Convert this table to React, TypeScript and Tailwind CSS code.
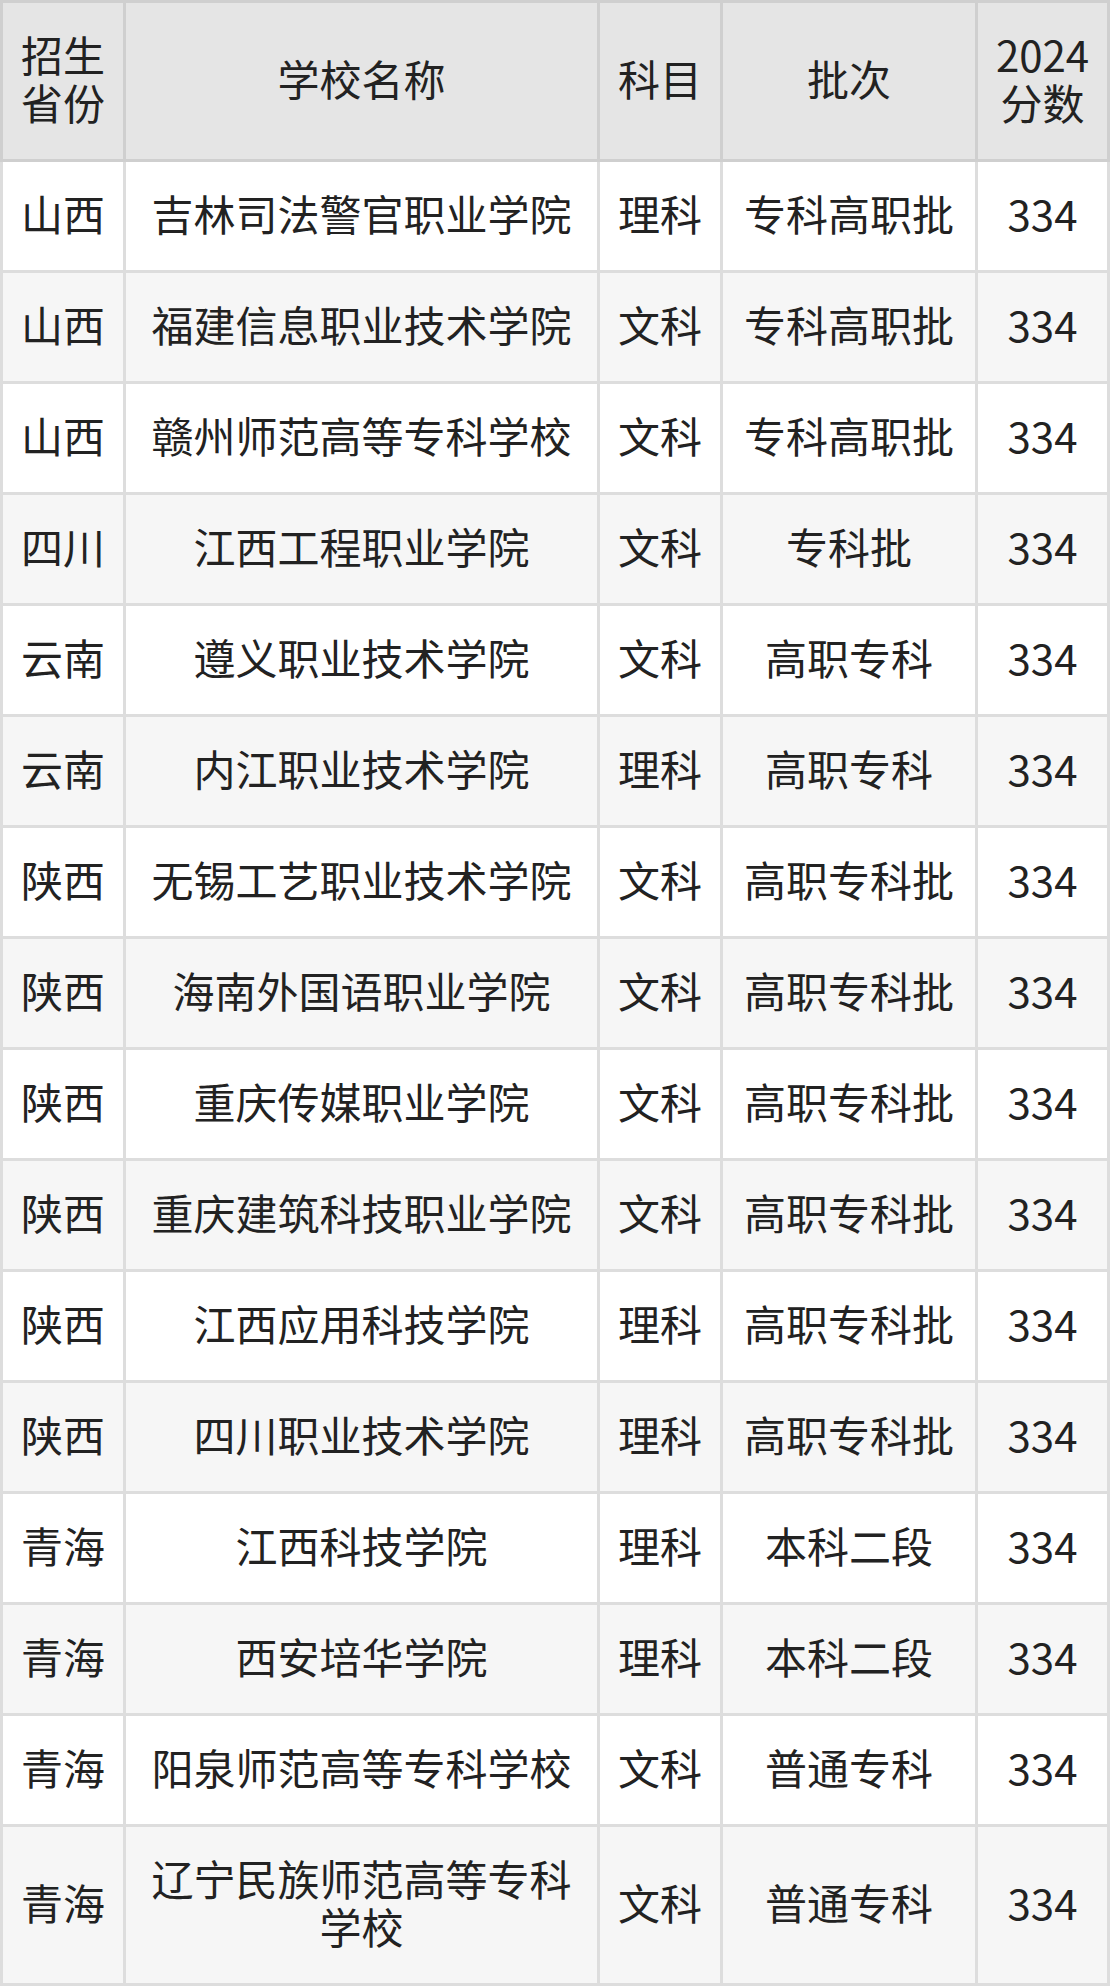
const rows = [
  ["山西", "吉林司法警官职业学院", "理科", "专科高职批", "334"],
  ["山西", "福建信息职业技术学院", "文科", "专科高职批", "334"],
  ["山西", "赣州师范高等专科学校", "文科", "专科高职批", "334"],
  ["四川", "江西工程职业学院", "文科", "专科批", "334"],
  ["云南", "遵义职业技术学院", "文科", "高职专科", "334"],
  ["云南", "内江职业技术学院", "理科", "高职专科", "334"],
  ["陕西", "无锡工艺职业技术学院", "文科", "高职专科批", "334"],
  ["陕西", "海南外国语职业学院", "文科", "高职专科批", "334"],
  ["陕西", "重庆传媒职业学院", "文科", "高职专科批", "334"],
  ["陕西", "重庆建筑科技职业学院", "文科", "高职专科批", "334"],
  ["陕西", "江西应用科技学院", "理科", "高职专科批", "334"],
  ["陕西", "四川职业技术学院", "理科", "高职专科批", "334"],
  ["青海", "江西科技学院", "理科", "本科二段", "334"],
  ["青海", "西安培华学院", "理科", "本科二段", "334"],
  ["青海", "阳泉师范高等专科学校", "文科", "普通专科", "334"],
  ["青海", "辽宁民族师范高等专科学校", "文科", "普通专科", "334"],
]

const headers = ["招生省份", "学校名称", "科目", "批次", "2024分数"]

export default function App() {
  return (
    <div className="w-[1110px] bg-white text-[#222222] font-['Noto_Sans_CJK_SC','Noto_Sans',sans-serif] text-[42px] leading-[48px]">
      <div className="grid grid-cols-[126px_474px_123px_255px_132px]">
        {headers.map((h, i) => (
          <div
            key={h}
            className={`flex items-center justify-center text-center bg-[#e5e5e5] border-t-[3px] border-b-[3px] border-r-[3px] border-[#cfcfcf] pt-[27px] pb-[33px] ${i === 0 ? "border-l-[3px] px-4" : i === 4 ? "px-2" : "px-4"}`}
          >
            {h}
          </div>
        ))}
        {rows.map((r, ri) =>
          r.map((c, ci) => (
            <div
              key={ri + "-" + ci}
              className={`flex items-center justify-center text-center border-b-[3px] border-r-[3px] border-[#dddddd] pt-[27px] pb-[33px] ${ri % 2 === 1 ? "bg-[#f6f6f6]" : "bg-white"} ${ci === 0 ? "border-l-[3px] px-4" : ci === 4 ? "px-2" : "px-4"}`}
            >
              {c}
            </div>
          ))
        )}
      </div>
    </div>
  )
}
